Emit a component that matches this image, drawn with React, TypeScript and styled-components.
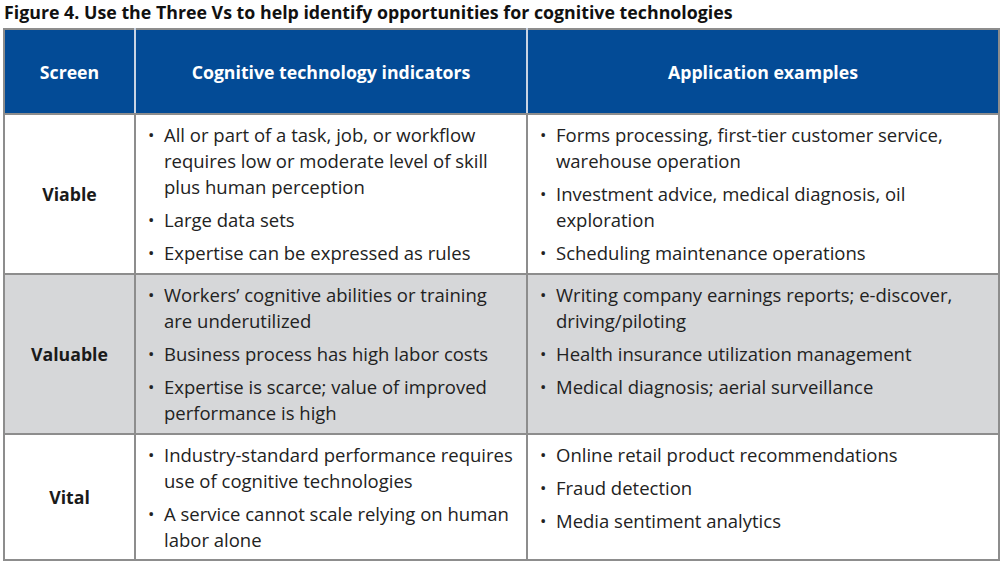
import React from "react";
import styled, { createGlobalStyle } from "styled-components";

const Global = createGlobalStyle`
  html, body { margin: 0; padding: 0; background: #ffffff; }
  body { font-family: "Open Sans", "Noto Sans", sans-serif; color: #1e1e1e; }
`;

const Page = styled.div`
  width: 1000px;
  height: 562px;
  box-sizing: border-box;
  padding: 1px 3px 0 3px;
  display: flex;
  flex-direction: column;
  gap: 4px;
`;

const Title = styled.h1`
  margin: 0;
  padding-left: 1px;
  font-size: 17.8px;
  line-height: 23px;
  font-weight: 700;
  color: #111;
`;

const Table = styled.table`
  width: 995px;
  border-collapse: collapse;
  table-layout: fixed;
  border: 2px solid #8d8d8d;
`;

const Col = styled.col<{ $w: number }>`
  width: ${(p) => p.$w}px;
`;

const HeadCell = styled.th`
  height: 85px;
  box-sizing: border-box;
  background: #034b96;
  color: #ffffff;
  font-size: 17.7px;
  font-weight: 700;
  text-align: center;
  vertical-align: middle;
  border-right: 2px solid #c9d4e4;
  border-bottom: 2px solid #8d8d8d;
  padding: 0;
  &:last-child { border-right: none; }
`;

const Row = styled.tr<{ $shade?: boolean; $h: number }>`
  height: ${(p) => p.$h}px;
  background: ${(p) => (p.$shade ? "#d6d7d9" : "#ffffff")};
`;

const LabelCell = styled.td`
  border: 2px solid #8d8d8d;
  text-align: center;
  vertical-align: middle;
  font-weight: 700;
  font-size: 17.7px;
  color: #1a1a1a;
  padding: 0;
`;

const ListCell = styled.td`
  border: 2px solid #8d8d8d;
  vertical-align: top;
  padding: 7px 10px 6px 10px;
`;

const List = styled.ul`
  margin: 0;
  padding: 0;
  list-style: none;
  display: flex;
  flex-direction: column;
  gap: 7px;
`;

const Item = styled.li`
  position: relative;
  padding-left: 18px;
  font-size: 18.5px;
  line-height: 26px;
  color: #222;
  &::before {
    content: "•";
    position: absolute;
    left: 2px;
    top: 0;
    font-size: 17px;
  }
`;

type RowData = {
  label: string;
  shade?: boolean;
  h: number;
  indicators: string[];
  examples: string[];
};

const rows: RowData[] = [
  {
    label: "Viable",
    h: 160,
    indicators: [
      "All or part of a task, job, or workflow requires low or moderate level of skill plus human perception",
      "Large data sets",
      "Expertise can be expressed as rules",
    ],
    examples: [
      "Forms processing, first-tier customer service, warehouse operation",
      "Investment advice, medical diagnosis, oil exploration",
      "Scheduling maintenance operations",
    ],
  },
  {
    label: "Valuable",
    shade: true,
    h: 160,
    indicators: [
      "Workers’ cognitive abilities or training are underutilized",
      "Business process has high labor costs",
      "Expertise is scarce; value of improved performance is high",
    ],
    examples: [
      "Writing company earnings reports; e-discover, driving/piloting",
      "Health insurance utilization management",
      "Medical diagnosis; aerial surveillance",
    ],
  },
  {
    label: "Vital",
    h: 125,
    indicators: [
      "Industry-standard performance requires use of cognitive technologies",
      "A service cannot scale relying on human labor alone",
    ],
    examples: [
      "Online retail product recommendations",
      "Fraud detection",
      "Media sentiment analytics",
    ],
  },
];

export default function App() {
  return (
    <>
      <Global />
      <Page>
        <Title>Figure 4. Use the Three Vs to help identify opportunities for cognitive technologies</Title>
        <Table>
          <colgroup>
            <Col $w={131} />
            <Col $w={392} />
            <Col $w={472} />
          </colgroup>
          <thead>
            <tr>
              <HeadCell>Screen</HeadCell>
              <HeadCell>Cognitive technology indicators</HeadCell>
              <HeadCell>Application examples</HeadCell>
            </tr>
          </thead>
          <tbody>
            {rows.map((r) => (
              <Row key={r.label} $shade={r.shade} $h={r.h}>
                <LabelCell>{r.label}</LabelCell>
                <ListCell>
                  <List>
                    {r.indicators.map((t) => (
                      <Item key={t}>{t}</Item>
                    ))}
                  </List>
                </ListCell>
                <ListCell>
                  <List>
                    {r.examples.map((t) => (
                      <Item key={t}>{t}</Item>
                    ))}
                  </List>
                </ListCell>
              </Row>
            ))}
          </tbody>
        </Table>
      </Page>
    </>
  );
}
